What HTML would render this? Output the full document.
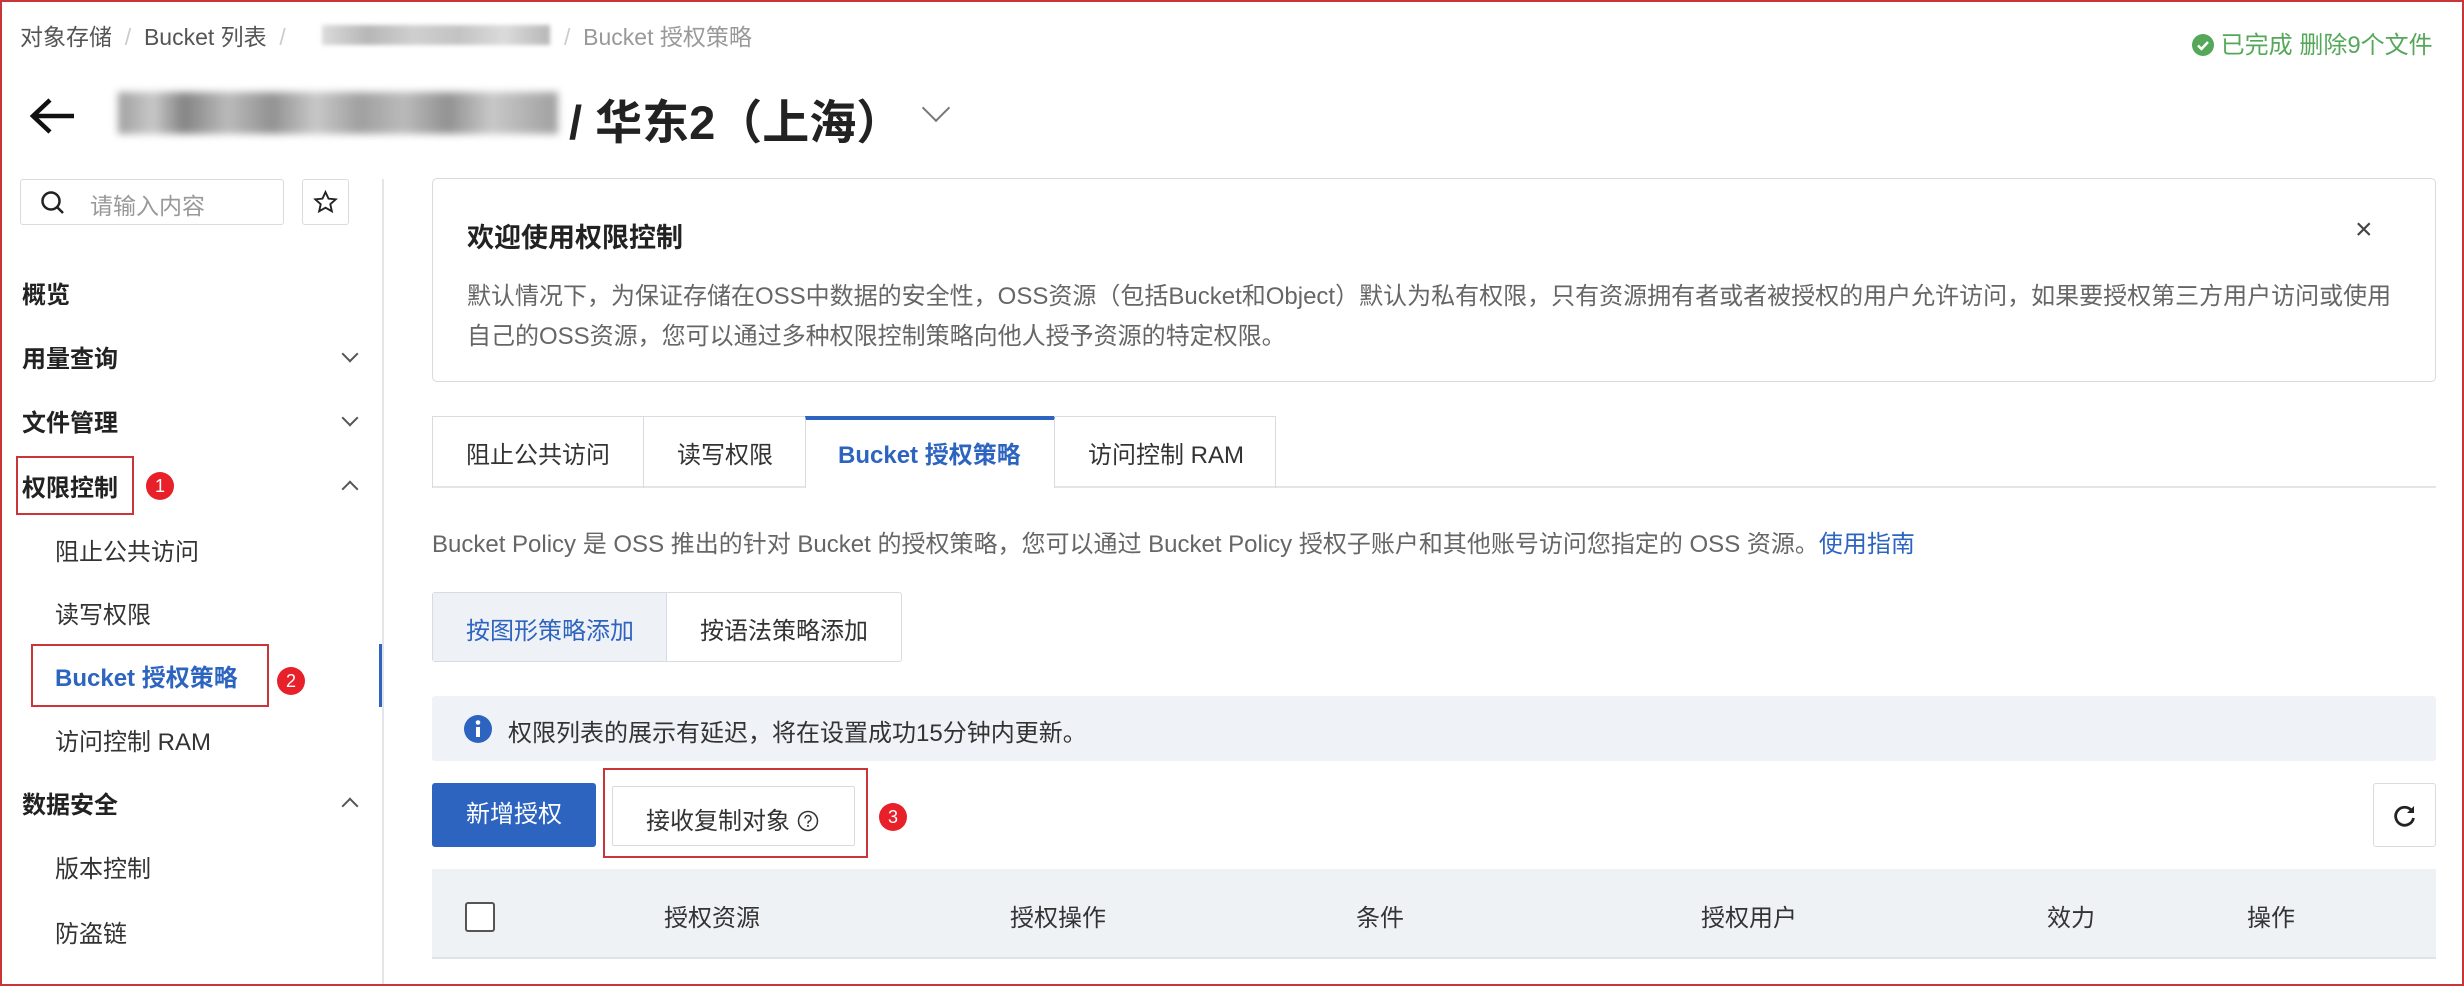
<!DOCTYPE html>
<html><head><meta charset="utf-8"><style>
*{margin:0;padding:0;box-sizing:border-box}
body{width:2464px;height:986px;overflow:hidden;background:#fff;font-family:"Liberation Sans","Noto Sans CJK SC",sans-serif;color:#333;position:relative}
.frame{position:absolute;left:0;top:0;width:2464px;height:986px;border:2px solid #c8363a;pointer-events:none;z-index:10}
.a{position:absolute;white-space:nowrap}
.crumb{top:18px;font-size:23px;color:#555}
.sep{color:#ccc}
.side{font-size:24px}
.top{left:22px;font-weight:bold;color:#222}
.sub{left:55px;color:#333}
.chev{position:absolute;left:344px;width:12px;height:12px;border-right:2px solid #555;border-bottom:2px solid #555}
.dn{transform:rotate(45deg)}
.up{transform:rotate(-135deg)}
.rbox{position:absolute;border:2px solid #c8363a}
.badge{position:absolute;width:28px;height:28px;border-radius:50%;background:#e8202a;color:#fff;font-size:18px;text-align:center;line-height:28px}
.box{position:absolute;border:1.5px solid #d8dbe0}
.t{font-size:24px}
</style></head><body>
<div class="frame"></div>

<div class="a crumb" style="left:20px">对象存储 <span class="sep">&nbsp;/&nbsp;</span> Bucket 列表 <span class="sep">&nbsp;/</span></div>
<div class="a" style="left:322px;top:25px;width:228px;height:20px;background:linear-gradient(90deg,#ccc,#999 20%,#bbb 40%,#aaa 60%,#ccc 80%,#999);filter:blur(2px);opacity:.7"></div>
<div class="a crumb" style="left:564px;color:#999"><span class="sep">/&nbsp;&nbsp;</span>Bucket 授权策略</div>

<div class="a" style="left:2192px;top:25px;font-size:24px;color:#55a85a">
<svg width="22" height="22" viewBox="0 0 22 22" style="vertical-align:-3px"><circle cx="11" cy="11" r="11" fill="#55a85a"/><path d="M6 11.5l3.5 3.5 6.5-7" stroke="#fff" stroke-width="2.5" fill="none"/></svg> 已完成 删除9个文件</div>

<svg class="a" style="left:28px;top:96px" width="50" height="40" viewBox="0 0 50 40"><path d="M46 20H5M22 4L5 20l17 16" stroke="#111" stroke-width="4.5" fill="none"/></svg>
<div class="a" style="left:118px;top:92px;width:440px;height:42px;background:linear-gradient(90deg,#888,#bbb 8%,#666 15%,#aaa 25%,#777 35%,#bbb 45%,#888 55%,#aaa 65%,#777 75%,#bbb 85%,#888);filter:blur(4px);opacity:.8"></div>
<div class="a" style="left:569px;top:84px;font-size:47px;font-weight:bold;color:#222">/ 华东2（上海）</div>
<div class="a" style="left:926px;top:98px;width:20px;height:20px;border-right:2.5px solid #777;border-bottom:2.5px solid #777;transform:rotate(45deg)"></div>

<!-- sidebar -->
<div class="box" style="left:20px;top:179px;width:264px;height:46px;border-radius:3px"></div>
<svg class="a" style="left:40px;top:190px" width="26" height="26" viewBox="0 0 26 26"><circle cx="11" cy="11" r="8.5" stroke="#222" stroke-width="2.5" fill="none"/><path d="M17 17l6 6" stroke="#222" stroke-width="2.5"/></svg>
<div class="a" style="left:90px;top:187px;font-size:23px;color:#999">请输入内容</div>
<div class="box" style="left:302px;top:179px;width:47px;height:46px;border-radius:3px"></div>
<svg class="a" style="left:313px;top:190px" width="25" height="25" viewBox="0 0 24 24"><path d="M12 2l2.9 6.3 6.9.7-5.2 4.6 1.5 6.8L12 17l-6.1 3.4 1.5-6.8L2.2 9l6.9-.7z" stroke="#222" stroke-width="1.8" fill="none"/></svg>
<div class="a" style="left:382px;top:179px;width:2px;height:807px;background:#e3e5e8"></div>
<div class="a" style="left:379px;top:644px;width:3px;height:63px;background:#2d64c0"></div>

<div class="a side top" style="top:275px">概览</div>
<div class="a side top" style="top:339px">用量查询</div><div class="chev dn" style="top:348px"></div>
<div class="a side top" style="top:403px">文件管理</div><div class="chev dn" style="top:412px"></div>
<div class="a side top" style="top:468px">权限控制</div><div class="chev up" style="top:483px"></div>
<div class="a side sub" style="top:532px">阻止公共访问</div>
<div class="a side sub" style="top:595px">读写权限</div>
<div class="a side sub" style="top:658px;color:#2d64c0;font-weight:bold">Bucket 授权策略</div>
<div class="a side sub" style="top:722px">访问控制 RAM</div>
<div class="a side top" style="top:785px">数据安全</div><div class="chev up" style="top:800px"></div>
<div class="a side sub" style="top:849px">版本控制</div>
<div class="a side sub" style="top:914px">防盗链</div>

<div class="rbox" style="left:16px;top:456px;width:118px;height:59px"></div>
<div class="badge" style="left:146px;top:472px">1</div>
<div class="rbox" style="left:31px;top:644px;width:238px;height:63px"></div>
<div class="badge" style="left:277px;top:667px">2</div>

<!-- welcome card -->
<div class="box" style="left:432px;top:178px;width:2004px;height:204px;border-radius:5px"></div>
<div class="a" style="left:467px;top:216px;font-size:27px;font-weight:bold;color:#222">欢迎使用权限控制</div>
<div class="a" style="left:2355px;top:213px;font-size:30px;color:#444">×</div>
<div class="a t" style="left:467px;top:276px;color:#666">默认情况下，为保证存储在OSS中数据的安全性，OSS资源（包括Bucket和Object）默认为私有权限，只有资源拥有者或者被授权的用户允许访问，如果要授权第三方用户访问或使用</div>
<div class="a t" style="left:467px;top:316px;color:#666">自己的OSS资源，您可以通过多种权限控制策略向他人授予资源的特定权限。</div>

<!-- tabs -->
<div class="a" style="left:432px;top:486px;width:2004px;height:2px;background:#e3e5e8"></div>
<div class="box" style="left:432px;top:416px;width:212px;height:72px;border-bottom:none"></div>
<div class="box" style="left:642px;top:416px;width:164px;height:72px;border-bottom:none;border-left:none"></div>
<div class="a" style="left:805px;top:416px;width:250px;height:72px;background:#fff;border-top:4px solid #2d64c0;border-left:1.5px solid #d8dbe0;border-right:1.5px solid #d8dbe0"></div>
<div class="box" style="left:1054px;top:416px;width:222px;height:72px;border-bottom:none;border-left:none"></div>
<div class="a t" style="left:466px;top:435px;color:#333">阻止公共访问</div>
<div class="a t" style="left:677px;top:435px;color:#333">读写权限</div>
<div class="a t" style="left:838px;top:435px;color:#2d64c0;font-weight:bold">Bucket 授权策略</div>
<div class="a t" style="left:1088px;top:435px;color:#333">访问控制 RAM</div>

<div class="a t" style="left:432px;top:524px;color:#666">Bucket Policy 是 OSS 推出的针对 Bucket 的授权策略，您可以通过 Bucket Policy 授权子账户和其他账号访问您指定的 OSS 资源。<span style="color:#2d64c0">使用指南</span></div>

<div class="box" style="left:432px;top:592px;width:470px;height:70px;border-radius:3px"></div>
<div class="a" style="left:433px;top:593px;width:234px;height:68px;background:#eef1f5;border-right:1.5px solid #d8dbe0"></div>
<div class="a t" style="left:466px;top:611px;color:#2d64c0">按图形策略添加</div>
<div class="a t" style="left:700px;top:611px;color:#333">按语法策略添加</div>

<div class="a" style="left:432px;top:696px;width:2004px;height:65px;background:#eff2f6;border-radius:3px"></div>
<svg class="a" style="left:464px;top:715px" width="28" height="28" viewBox="0 0 28 28"><circle cx="14" cy="14" r="14" fill="#2d64c0"/><rect x="12" y="12" width="4" height="10" fill="#fff"/><circle cx="14" cy="7.5" r="2.3" fill="#fff"/></svg>
<div class="a t" style="left:508px;top:713px;color:#333">权限列表的展示有延迟，将在设置成功15分钟内更新。</div>

<div class="a t" style="left:432px;top:783px;width:164px;height:64px;background:#2d64c0;border-radius:3px;color:#fff;text-align:center;line-height:64px">新增授权</div>
<div class="box" style="left:612px;top:786px;width:243px;height:60px;border-radius:2px"></div>
<div class="a t" style="left:646px;top:801px;color:#333">接收复制对象 <svg width="22" height="22" viewBox="0 0 22 22" style="vertical-align:-3px"><circle cx="11" cy="11" r="9.5" stroke="#333" stroke-width="1.5" fill="none"/><path d="M8 8.5a3 3 0 1 1 4 2.8c-1 .4-1 1-1 2.2" stroke="#333" stroke-width="1.5" fill="none"/><circle cx="11" cy="16" r="1" fill="#333"/></svg></div>
<div class="rbox" style="left:603px;top:768px;width:265px;height:90px"></div>
<div class="badge" style="left:879px;top:803px">3</div>
<div class="box" style="left:2373px;top:783px;width:63px;height:64px;border-radius:3px"></div>
<svg class="a" style="left:2392px;top:803px" width="26" height="26" viewBox="0 0 26 26"><path d="M20 8A9 9 0 1 0 21.5 15" stroke="#222" stroke-width="2.8" fill="none"/><path d="M22 3v7h-7z" fill="#222"/></svg>

<!-- table header -->
<div class="a" style="left:432px;top:869px;width:2004px;height:90px;background:#eff2f5;border-bottom:2px solid #dfe2e6"></div>
<div class="a" style="left:465px;top:902px;width:30px;height:30px;border:2px solid #555;border-radius:3px;background:#fff"></div>
<div class="a t" style="left:664px;top:898px;color:#333">授权资源</div>
<div class="a t" style="left:1010px;top:898px;color:#333">授权操作</div>
<div class="a t" style="left:1356px;top:898px;color:#333">条件</div>
<div class="a t" style="left:1701px;top:898px;color:#333">授权用户</div>
<div class="a t" style="left:2047px;top:898px;color:#333">效力</div>
<div class="a t" style="left:2247px;top:898px;color:#333">操作</div>
</body></html>
